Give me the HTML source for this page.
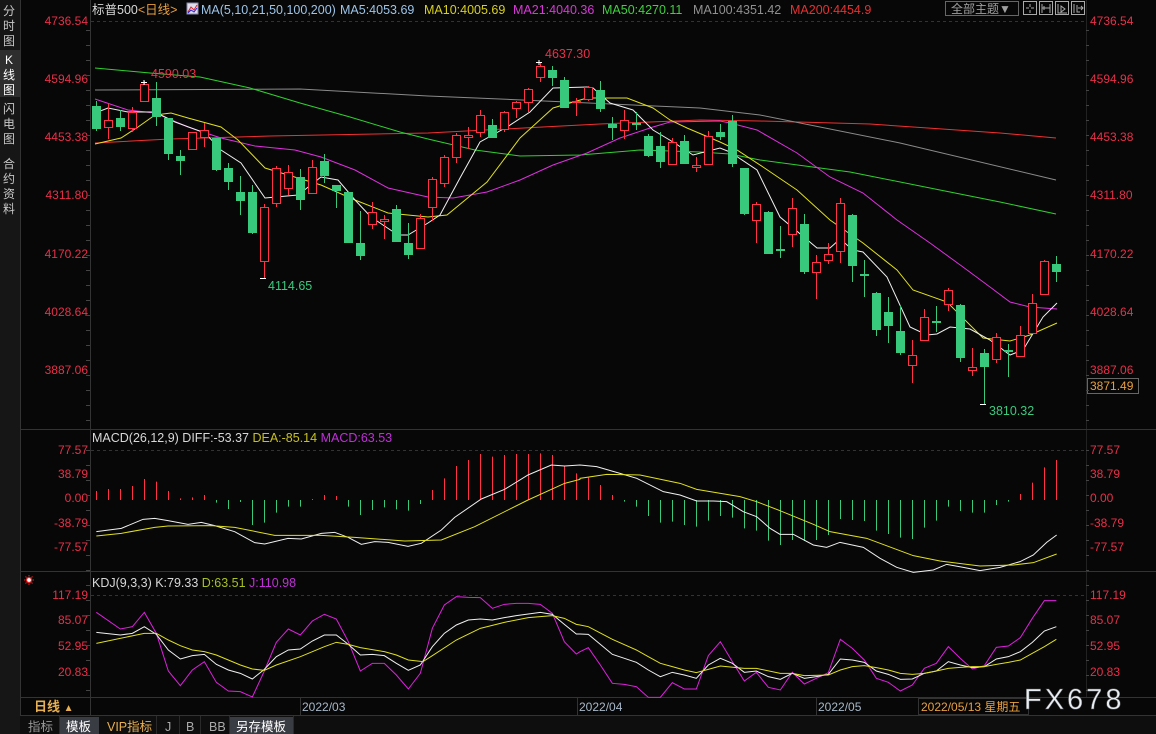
<!DOCTYPE html>
<html><head><meta charset="utf-8">
<style>
html,body{margin:0;padding:0;background:#070707;width:1156px;height:734px;overflow:hidden}
svg{display:block}
text{font-family:"Liberation Sans","Noto Sans CJK SC",sans-serif}
</style></head>
<body>
<svg id="s" width="1156" height="734" xmlns="http://www.w3.org/2000/svg">
<rect width="1156" height="734" fill="#070707"/>
<!-- left sidebar -->
<rect x="0" y="0" width="20" height="734" fill="#161616"/>
<rect x="0" y="50" width="20" height="47" fill="#2e2e2e"/>
<g fill="#c8c8c8" font-size="12">
<text x="3" y="15">分</text><text x="3" y="30">时</text><text x="3" y="45">图</text>
<text x="5" y="64" fill="#fff">K</text><text x="3" y="79" fill="#fff">线</text><text x="3" y="94" fill="#fff">图</text>
<text x="3" y="113">闪</text><text x="3" y="128">电</text><text x="3" y="143">图</text>
<text x="3" y="168">合</text><text x="3" y="183">约</text><text x="3" y="198">资</text><text x="3" y="213">料</text>
</g>
<line x1="20.5" y1="0" x2="20.5" y2="734" stroke="#333"/>
<line x1="90.5" y1="0" x2="90.5" y2="697" stroke="#333"/>
<line x1="1086.5" y1="0" x2="1086.5" y2="697" stroke="#222"/>
<!-- panel separators -->
<line x1="20" y1="429.5" x2="1156" y2="429.5" stroke="#333"/>
<line x1="20" y1="571.5" x2="1156" y2="571.5" stroke="#333"/>
<line x1="20" y1="697.5" x2="1156" y2="697.5" stroke="#333"/>
<line x1="20" y1="715.5" x2="1156" y2="715.5" stroke="#333"/>
<!-- dashed top lines -->
<g stroke="#333" stroke-dasharray="3,3">
<line x1="91" y1="21.5" x2="1086" y2="21.5"/>
<line x1="91" y1="450.5" x2="1086" y2="450.5"/>
<line x1="91" y1="595.5" x2="1086" y2="595.5"/>
</g>
<!-- header -->
<text x="92" y="14" font-size="12.5" fill="#d8d8d8">标普500<tspan fill="#e8a040">&lt;日线&gt;</tspan></text>
<rect x="187" y="3" width="11" height="11" fill="#dde" stroke="#88a"/>
<polyline points="188,12 191,7 194,10 197,5" fill="none" stroke="#d22" stroke-width="1"/>
<polyline points="188,13 191,10 194,12 197,8" fill="none" stroke="#22d" stroke-width="1"/>
<g font-size="12.5">
<text x="201" y="14" fill="#9cc4e8">MA(5,10,21,50,100,200)</text>
<text x="340" y="14" fill="#9cc4e8">MA5:4053.69</text>
<text x="424" y="14" fill="#d8d020">MA10:4005.69</text>
<text x="513" y="14" fill="#d838d8">MA21:4040.36</text>
<text x="602" y="14" fill="#40d040">MA50:4270.11</text>
<text x="693" y="14" fill="#909090">MA100:4351.42</text>
<text x="790" y="14" fill="#e83030">MA200:4454.9</text>
</g>
<rect x="945.5" y="1.5" width="73" height="14" fill="none" stroke="#666"/>
<text x="951" y="13" font-size="12" fill="#a0a0a0">全部主题▼</text>
<g fill="none" stroke="#aaa">
<rect x="1023.5" y="1.5" width="13" height="13"/><rect x="1039.5" y="1.5" width="13" height="13"/>
<rect x="1055.5" y="1.5" width="13" height="13"/><rect x="1071.5" y="1.5" width="13" height="13"/>
<path d="M1030 4v3M1030 10v3M1026 8h3M1031 8h3"/>
<path d="M1042 4v9M1050 4v9M1042 8h8M1044 6v4"/>
<path d="M1058 4v9h9M1061 6l4 3-4 3z"/>
<path d="M1074 4v9M1077 5v7h3M1078 8h5M1081 6l2 2-2 2"/>
</g>
<!-- axis labels -->
<g font-size="12" fill="#e8304a">
<g text-anchor="end">
<text x="88" y="25">4736.54</text><text x="88" y="83">4594.96</text><text x="88" y="141">4453.38</text>
<text x="88" y="199">4311.80</text><text x="88" y="258">4170.22</text><text x="88" y="316">4028.64</text>
<text x="88" y="374">3887.06</text>
<text x="88" y="454">77.57</text><text x="88" y="478">38.79</text><text x="88" y="502">0.00</text>
<text x="88" y="527">-38.79</text><text x="88" y="551">-77.57</text>
<text x="88" y="599">117.19</text><text x="88" y="624">85.07</text><text x="88" y="650">52.95</text><text x="88" y="676">20.83</text>
</g>
<text x="1090" y="25">4736.54</text><text x="1090" y="83">4594.96</text><text x="1090" y="141">4453.38</text>
<text x="1090" y="199">4311.80</text><text x="1090" y="258">4170.22</text><text x="1090" y="316">4028.64</text>
<text x="1090" y="374">3887.06</text>
<text x="1090" y="454">77.57</text><text x="1090" y="478">38.79</text><text x="1090" y="502">0.00</text>
<text x="1090" y="527">-38.79</text><text x="1090" y="551">-77.57</text>
<text x="1090" y="599">117.19</text><text x="1090" y="624">85.07</text><text x="1090" y="650">52.95</text><text x="1090" y="676">20.83</text>
</g>
<rect x="1087.5" y="378.5" width="51" height="15" fill="#070707" stroke="#666"/>
<text x="1090" y="390" font-size="12" fill="#e8a040">3871.49</text>
<g id="ticks" stroke="#444"></g>
<!-- chart content -->
<g id="ma"></g>
<g id="candles"></g>
<g id="macd"></g>
<g id="kdj"></g>
<!-- annotations -->
<g font-size="12.5">
<text x="151" y="78" fill="#e8304a">4590.03</text>
<text x="545" y="58" fill="#e8304a">4637.30</text>
<text x="268" y="290" fill="#3cc880">4114.65</text>
<text x="989" y="415" fill="#3cc880">3810.32</text>
</g>
<g stroke="#fff"><path d="M141 82.5h6M144 80v5M536 62.5h6M539 60v5M260 278.5h6M980 404.5h6"/></g>
<text x="92" y="442" font-size="12.5" fill="#d8d8d8">MACD(26,12,9) DIFF:-53.37 <tspan fill="#c8c020">DEA:-85.14</tspan> <tspan fill="#c030d8">MACD:63.53</tspan></text>
<text x="92" y="587" font-size="12.5" fill="#d8d8d8">KDJ(9,3,3) K:79.33 <tspan fill="#a8c020">D:63.51</tspan> <tspan fill="#c030d8">J:110.98</tspan></text>
<circle cx="29" cy="580" r="2.5" fill="#fff" stroke="#e22" stroke-width="1.2"/>
<g stroke="#e22"><path d="M29 575v1.5M29 583.5v1.5M24 580h1.5M32.5 580h1.5M25.5 576.5l1 1M31.5 582.5l1 1M25.5 583.5l1-1M31.5 577.5l1-1"/></g>
<!-- bottom -->
<line x1="90.5" y1="697" x2="90.5" y2="715" stroke="#333"/>
<text x="34" y="711" font-size="13" font-weight="bold" fill="#e8b050">日线 <tspan font-size="10">▲</tspan></text>
<g font-size="12" fill="#a8b8c8">
<text x="302" y="711">2022/03</text><text x="579" y="711">2022/04</text><text x="818" y="711">2022/05</text>
</g>
<line x1="300.5" y1="697" x2="300.5" y2="715" stroke="#333"/>
<line x1="577.5" y1="697" x2="577.5" y2="715" stroke="#333"/>
<line x1="816.5" y1="697" x2="816.5" y2="715" stroke="#333"/>
<rect x="918.5" y="698.5" width="110" height="16" fill="#070707" stroke="#333"/>
<text x="921" y="711" font-size="12" fill="#e8a040">2022/05/13 星期五</text>
<text x="1024" y="709" font-size="29" fill="#e8eef4" letter-spacing="3" stroke="#555" stroke-width="0.5">FX678</text>
<rect x="20" y="716" width="1136" height="18" fill="#0e0e0e"/>
<rect x="60" y="717" width="39" height="17" fill="#3a3c44"/>
<rect x="230" y="717" width="63" height="17" fill="#3a3c44"/>
<g stroke="#2a2a2a"><path d="M59.5 716v18M156.5 716v18M179.5 716v18M200.5 716v18M229.5 716v18M293.5 716v18"/></g>
<g font-size="12.5">
<text x="28" y="731" fill="#999">指标</text>
<text x="66" y="731" fill="#fff">模板</text>
<text x="107" y="731" fill="#e8b050">VIP指标</text>
<text x="165" y="731" fill="#aaa">J</text>
<text x="186" y="731" fill="#aaa">B</text>
<text x="209" y="731" fill="#aaa">BB</text>
<text x="236" y="731" fill="#fff">另存模板</text>
</g>
</svg>
<script>
var NS="http://www.w3.org/2000/svg";
function el(p,t,a){var e=document.createElementNS(NS,t);for(var k in a)e.setAttribute(k,a[k]);p.appendChild(e);return e;}
var ticks=document.getElementById('ticks');
for(var y=30;y<697;y+=15){if(y>428&&y<440)continue;if(y>570&&y<582)continue;el(ticks,'line',{x1:86,y1:y+.5,x2:90,y2:y+.5});el(ticks,'line',{x1:1086,y1:y+.5,x2:1089,y2:y+.5});}
// candles: x, bodyTop, bodyBot, wickTop, wickBot, color
var C=[[96,106,129,101,131,'g'],[108,120,127,103,139,'r'],[120,118,127,110,131,'g'],[132,112,128,107,132,'r'],[144,84,101,81,101,'r'],[156,98,117,82,126,'g'],[168,118,154,118,160,'g'],[180,156,161,150,175,'g'],[192,132,149,132,149,'r'],[204,130,137,123,147,'r'],[216,138,170,138,171,'g'],[228,168,182,163,190,'g'],[240,192,201,176,215,'g'],[252,192,233,185,234,'g'],[264,207,261,204,278,'r'],[276,168,203,166,207,'r'],[288,172,188,165,195,'r'],[300,177,200,169,210,'g'],[312,167,193,160,193,'r'],[324,161,176,154,183,'g'],[336,185,191,185,208,'g'],[348,192,243,192,243,'g'],[360,243,256,211,260,'g'],[372,212,224,202,229,'r'],[384,219,221,215,239,'r'],[396,209,242,205,242,'g'],[408,243,255,223,259,'g'],[420,218,248,214,248,'r'],[432,179,207,177,221,'r'],[444,157,183,155,187,'r'],[456,135,157,133,163,'r'],[468,135,137,127,149,'r'],[480,115,132,110,137,'r'],[492,125,138,119,138,'g'],[504,112,129,111,132,'r'],[516,102,108,101,118,'r'],[528,89,102,88,112,'r'],[540,66,77,62,82,'r'],[552,70,78,66,86,'g'],[564,80,108,77,108,'g'],[576,101,102,98,116,'r'],[588,87,99,86,101,'r'],[600,90,109,81,112,'g'],[612,124,128,117,140,'g'],[624,120,130,110,139,'r'],[636,123,125,112,130,'g'],[648,136,156,134,157,'g'],[660,146,162,132,168,'g'],[672,142,164,138,164,'r'],[684,141,164,135,164,'g'],[696,165,167,157,172,'r'],[708,136,164,131,164,'r'],[720,132,137,124,140,'g'],[732,121,164,115,167,'g'],[744,168,214,168,215,'g'],[756,204,220,202,243,'r'],[768,212,254,211,254,'g'],[780,249,250,226,258,'g'],[792,208,234,198,247,'r'],[804,224,272,214,274,'g'],[816,262,272,255,299,'r'],[828,254,260,243,264,'r'],[840,203,251,198,263,'r'],[852,215,266,214,282,'g'],[864,274,275,260,297,'g'],[876,293,330,292,336,'g'],[888,312,326,297,343,'g'],[900,331,353,305,355,'g'],[912,355,365,340,383,'r'],[924,317,340,309,340,'r'],[936,321,322,306,332,'g'],[948,290,304,288,311,'r'],[960,305,358,304,362,'g'],[972,367,370,348,376,'r'],[984,353,367,349,404,'g'],[996,337,359,333,363,'r'],[1008,350,351,344,377,'g'],[1020,335,356,326,356,'r'],[1032,303,333,294,333,'r'],[1044,261,294,260,294,'r'],[1056,264,272,256,282,'g']];
var cg=document.getElementById('candles');
var RED='#ff3246',GRN='#38c97c';
C.forEach(function(c){var x=c[0],col=c[5]=='r'?RED:GRN;
 if(c[5]=='r'){el(cg,'line',{x1:x+.5,y1:c[3],x2:x+.5,y2:c[1],stroke:col});el(cg,'line',{x1:x+.5,y1:c[2],x2:x+.5,y2:c[4],stroke:col});
  el(cg,'rect',{x:x-3.5,y:c[1]+.5,width:8,height:Math.max(1,c[2]-c[1]),fill:'#070707',stroke:col});}
 else{el(cg,'line',{x1:x+.5,y1:c[3],x2:x+.5,y2:c[4],stroke:col});el(cg,'rect',{x:x-4,y:c[1],width:9,height:Math.max(2,c[2]-c[1]),fill:col});}
});
function pl(g,pts,col,w){el(g,'polyline',{points:pts.map(function(p){return p[0]+','+p[1]}).join(' '),fill:'none',stroke:col,'stroke-width':w||1});}
var mg=document.getElementById('ma');
pl(mg,[[95,143],[170,139],[270,136],[428,133],[600,124],[700,120],[760,121],[870,124],[1000,133],[1056,138]],'#f03030');
pl(mg,[[95,90],[300,89],[428,96],[500,99],[700,108],[760,115],[900,143],[1056,180]],'#8a8a8a');
pl(mg,[[95,68],[150,73],[200,77],[250,88],[300,103],[350,117],[400,132],[428,139],[475,150],[520,156],[580,155],[640,150],[700,152],[730,154],[760,160],[850,172],[940,190],[1000,202],[1056,214]],'#30d030');
pl(mg,[[95,99],[128,110],[155,113],[188,127],[221,138],[255,146],[295,150],[321,157],[355,170],[388,188],[428,197],[453,198],[487,192],[520,180],[553,165],[587,153],[620,138],[653,127],[670,122],[720,121],[730,123],[757,130],[797,153],[830,177],[863,193],[897,220],[930,243],[963,267],[990,287],[1010,302],[1030,307],[1057,309]],'#e030e0');
pl(mg,[[95,144],[121,138],[138,127],[155,115],[171,113],[188,118],[221,127],[238,140],[265,168],[288,175],[321,185],[355,200],[388,213],[428,217],[447,215],[487,182],[520,138],[553,108],[587,98],[627,98],[653,108],[670,120],[687,128],[720,142],[737,150],[763,167],[797,190],[830,220],[863,243],[897,270],[913,290],[947,302],[983,338],[1010,341],[1030,335],[1057,323]],'#e0e020');
pl(mg,[[95,113],[108,108],[128,112],[155,112],[175,122],[205,133],[221,150],[241,163],[265,198],[298,195],[321,177],[338,180],[355,200],[371,217],[398,235],[408,235],[428,223],[440,215],[460,178],[480,142],[507,127],[530,112],[553,88],[587,87],[593,88],[610,103],[633,110],[653,130],[673,142],[693,155],[720,148],[730,152],[757,170],[780,217],[817,248],[830,248],[840,239],[853,250],[863,252],[887,277],[910,327],[927,335],[937,334],[950,327],[970,329],[990,340],[1010,355],[1023,350],[1043,317],[1057,303]],'#f0f0f0');
// MACD bars
var MB={0:183,1:177,2:177,3:168,4:147,5:155,6:183,7:205,8:202,9:195,10:218,11:237,12:216,13:285,14:278,15:248,16:230,17:230,18:207,19:195,20:198,21:230,22:255,23:240,24:232,25:238,26:242,27:222,28:180,29:145,30:108,31:90,32:72,33:80,34:75,35:72,36:72,37:70,38:75,39:108,40:130};
var J9=[143,165,195,215,230,258,278,275,285,290,272,258,263,295,302,332,345,330,333,330,315,267,270,273,302,312,323,327,293,272,230,243,248,248,225,215,192,158,112,90];
J9.forEach(function(v,j){MB[41+j]=v;});
var bg=document.getElementById('macd');
for(var k=0;k<=80;k++){var v=430+MB[k]/3,x=96.5+12*k;var col=v<500.5?RED:GRN;el(bg,'line',{x1:x,y1:500,x2:x,y2:v,stroke:col});}
function tf(arr,ox,oy){return arr.map(function(p){return [ox+p[0]/3,oy+p[1]/3]});}
pl(bg,tf([[25,305],[100,295],[165,268],[200,265],[240,272],[300,283],[340,277],[380,287],[440,305],[500,338],[530,342],[600,325],[640,327],[700,310],[740,307],[780,322],[820,343],[860,335],[900,337],[960,349],[1000,340],[1060,300],[1100,262],[1180,207],[1250,178],[1320,135],[1390,105],[1430,108],[1476,105]],88,430).concat(tf([[0,105],[50,110],[120,130],[170,145],[250,185],[300,195],[350,213],[400,213],[440,215],[490,245],[530,260],[570,295],[600,313],[640,313],[700,345],[740,352],[780,337],[850,352],[900,385],[950,412],[1000,427],[1060,420],[1100,403],[1150,412],[1200,422],[1260,412],[1320,395],[1360,375],[1400,337],[1430,315]],580,430)),'#f0f0f0');
pl(bg,tf([[25,318],[100,310],[200,292],[240,288],[370,287],[440,292],[560,316],[700,316],[800,322],[950,333],[1060,330],[1160,290],[1320,210],[1430,160],[1476,148]],88,430).concat(tf([[0,145],[80,133],[180,135],[300,160],[350,178],[480,200],[530,215],[600,242],[700,283],[750,305],[860,325],[1000,377],[1080,393],[1200,408],[1300,405],[1360,398],[1430,372]],580,430)),'#e0e020');
var kg=document.getElementById('kdj');
pl(kg,tf([[25,82],[97,132],[133,125],[169,82],[205,145],[241,258],[277,302],[313,255],[349,230],[385,292],[421,318],[457,320],[493,336],[529,258],[565,172],[601,132],[637,150],[673,108],[709,88],[745,102],[781,170],[817,258],[853,235],[889,235],[925,270],[961,312],[997,265],[1033,130],[1069,60],[1105,35],[1141,37],[1177,38],[1213,70],[1249,58],[1285,55],[1321,55],[1357,58],[1393,85],[1429,170],[1465,207]],88,585).concat(tf([[0,200],[25,188],[61,240],[97,295],[133,298],[169,305],[205,337],[241,337],[277,293],[313,312],[349,312],[385,212],[421,170],[457,230],[493,288],[529,262],[565,307],[601,315],[637,262],[673,297],[709,280],[745,263],[781,163],[817,190],[853,225],[889,280],[925,292],[961,318],[997,300],[1033,250],[1069,235],[1105,185],[1141,220],[1177,252],[1213,242],[1249,187],[1285,183],[1321,158],[1357,100],[1393,47],[1429,47]],580,585)),'#e020e0');
pl(kg,tf([[25,142],[97,150],[133,145],[169,125],[205,148],[241,195],[277,222],[313,212],[349,208],[385,238],[421,255],[457,265],[493,282],[529,253],[565,215],[601,195],[637,192],[673,168],[709,150],[745,150],[781,178],[817,210],[853,208],[889,212],[925,235],[961,256],[997,240],[1033,185],[1069,145],[1105,120],[1141,105],[1177,102],[1213,105],[1249,98],[1285,92],[1321,87],[1357,82],[1393,88],[1429,118],[1465,147]],88,585).concat(tf([[0,147],[25,148],[97,208],[133,220],[169,232],[205,255],[241,275],[277,262],[313,270],[349,280],[385,240],[421,220],[457,235],[493,262],[529,258],[565,275],[601,283],[637,265],[673,280],[709,275],[745,268],[781,222],[817,225],[853,232],[889,258],[925,268],[961,283],[997,282],[1033,265],[1069,258],[1105,230],[1141,240],[1177,248],[1213,245],[1249,222],[1285,215],[1321,200],[1357,172],[1393,138],[1429,125]],580,585)),'#f0f0f0');
pl(kg,tf([[25,175],[169,145],[205,145],[241,165],[277,182],[313,195],[349,200],[385,210],[457,240],[493,252],[529,256],[565,240],[637,215],[709,185],[745,172],[781,178],[817,188],[889,200],[925,210],[961,225],[1005,230],[1033,212],[1105,165],[1177,130],[1249,112],[1321,98],[1393,92],[1429,100],[1465,118]],88,585).concat(tf([[0,120],[25,125],[97,163],[169,195],[205,215],[241,235],[277,245],[313,255],[349,263],[385,253],[421,243],[493,250],[529,250],[601,265],[637,265],[673,272],[745,270],[781,255],[817,245],[853,242],[889,248],[925,255],[961,265],[997,268],[1033,265],[1069,258],[1105,250],[1141,247],[1177,245],[1213,245],[1249,238],[1285,232],[1321,225],[1357,205],[1393,185],[1429,163]],580,585)),'#e0e020');
</script>
</body></html>
